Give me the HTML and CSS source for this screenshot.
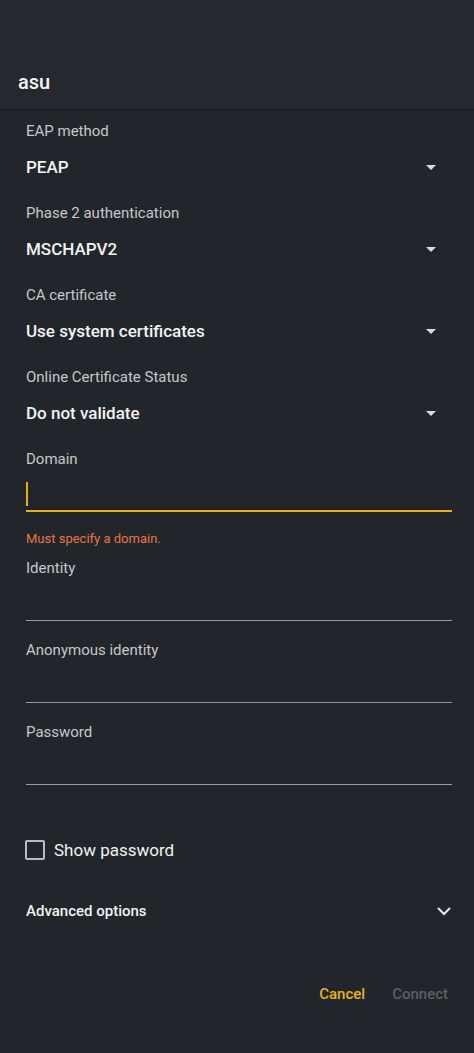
FILE: index.html
```html
<!DOCTYPE html>
<html>
<head>
    <title>asu</title>
    <link rel="stylesheet" href="styles.css">
</head>
<body>
    <div class="header">
        <h1 class="title">asu</h1>
    </div>

    <div class="form">
        <div class="field">
            <div class="label">EAP method</div>
            <div class="select"><span>PEAP</span><span class="caret"></span></div>
        </div>
        <div class="field">
            <div class="label">Phase 2 authentication</div>
            <div class="select"><span>MSCHAPV2</span><span class="caret"></span></div>
        </div>
        <div class="field">
            <div class="label">CA certificate</div>
            <div class="select"><span>Use system certificates</span><span class="caret"></span></div>
        </div>
        <div class="field">
            <div class="label">Online Certificate Status</div>
            <div class="select"><span>Do not validate</span><span class="caret"></span></div>
        </div>

        <div class="input-field">
            <div class="label">Domain</div>
            <div class="input focused"><span class="cursor"></span></div>
            <div class="error">Must specify a domain.</div>
        </div>
        <div class="input-field">
            <div class="label">Identity</div>
            <div class="input"></div>
        </div>
        <div class="input-field">
            <div class="label">Anonymous identity</div>
            <div class="input"></div>
        </div>
        <div class="input-field">
            <div class="label">Password</div>
            <div class="input"></div>
        </div>

        <label class="check">
            <span class="box"></span>
            <span>Show password</span>
        </label>

        <div class="advanced">
            <span>Advanced options</span>
            <svg width="16" height="10" viewBox="0 0 16 10"><path d="M2 2 L8 8 L14 2" fill="none" stroke="#e4e6e8" stroke-width="2.2"/></svg>
        </div>
    </div>

    <div class="actions">
        <button class="btn cancel">Cancel</button>
        <button class="btn disabled">Connect</button>
    </div>
</body>
</html>
```

FILE: styles.css
```css
body { margin: 0; background: #22262a; font-family: Roboto, "Noto Sans", sans-serif; color: #f2f3f4; height: 1053px; }
.header { height: 109px; background: #25282d; display: flex; align-items: flex-end; padding: 0 18px 15px; box-sizing: border-box; box-shadow: 0 1px 2px rgba(0,0,0,0.35); }
.title { margin: 0; font-size: 20px; font-weight: 500; line-height: 24px; color: #f4f5f6; }
.form { padding: 12px 22px 0 26px; }
.label { font-size: 15px; line-height: 20px; color: #c6c8cb; }
.field { height: 82px; }
.select { display: flex; justify-content: space-between; align-items: center; margin-top: 14px; height: 24px; font-size: 17px; font-weight: 500; padding-right: 16px; }
.caret { width: 0; height: 0; border-left: 5.5px solid transparent; border-right: 5.5px solid transparent; border-top: 5.5px solid #d8dadc; }
.input-field { margin-bottom: 19px; }
.input { height: 43px; border-bottom: 1px solid #9a9da0; box-sizing: border-box; }
.input.focused { height: 43px; border-bottom: 2px solid #e5b20c; display: flex; align-items: flex-start; padding-top: 13px; }
.cursor { width: 2px; height: 24px; background: #e5b20c; }
.error { font-size: 13px; line-height: 16px; color: #e8744b; margin-top: 19px; margin-bottom: -8px; }
.check { display: flex; align-items: center; gap: 9px; margin-top: 54px; margin-left: -1px; font-size: 17px; height: 22px; }
.box { width: 20px; height: 20px; border: 2px solid #b9bcbf; border-radius: 2px; box-sizing: border-box; }
.advanced { display: flex; justify-content: space-between; align-items: center; margin-top: 39px; font-size: 15px; font-weight: 500; height: 22px; }
.actions { display: flex; justify-content: flex-end; gap: 27px; padding: 62px 26px 0 0; }
.btn { background: none; border: none; padding: 0; font-family: Roboto, "Noto Sans", sans-serif; font-size: 15px; font-weight: 500; line-height: 20px; }
.cancel { color: #eab30f; }
.disabled { color: #5c6064; }
```
